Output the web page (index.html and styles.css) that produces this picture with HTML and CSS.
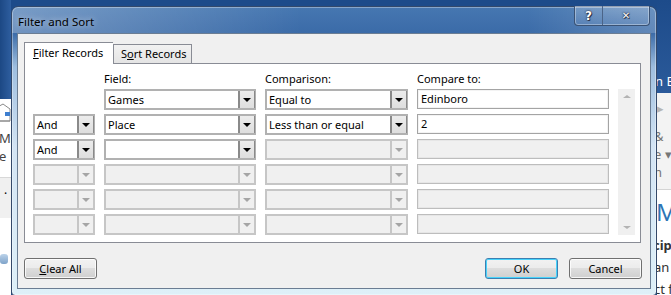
FILE: index.html
```html
<!DOCTYPE html>
<html>
<head>
    <title>Filter and Sort</title>
    <link rel="stylesheet" href="styles.css">
</head>
<body>
    <div class="desktop">
        <div class="app-left">
            <div class="left-blue"></div>
            <div class="left-icon">
                <svg width="11" height="26" viewBox="0 0 11 26">
                    <path d="M-6 6 L3 1 L10 6 L10 18 L-6 18 Z" fill="#fff" stroke="#8a8a8a" stroke-width="1"/>
                    <rect x="5" y="9" width="5" height="4" fill="#3f7fcf"/>
                    <path d="M-6 18 L10 18" stroke="#8a8a8a"/>
                </svg>
            </div>
            <div class="left-text">Ma</div>
            <div class="left-text small">e</div>
            <div class="left-band">.</div>
            <div class="left-fig"></div>
        </div>
        <div class="app-mid"></div>
        <div class="app-right">
            <div class="right-blue"><span>n B</span></div>
            <div class="right-ribbon">
                <div class="rr-arrow">&#9656;</div>
                <div class="rr-text">&amp;</div>
                <div class="rr-text">e &#9662;</div>
                <div class="rr-text">h</div>
            </div>
            <div class="right-doc">
                <div class="rd-head">M</div>
                <div class="rd-bold">cip</div>
                <div class="rd-text">an</div>
                <div class="rd-text">ct f</div>
            </div>
        </div>

        <div class="dialog">
            <div class="titlebar">
                <span class="title">Filter and Sort</span>
                <div class="caption-btns">
                    <span class="cap help">?</span>
                    <span class="cap close">&#x2715;</span>
                </div>
            </div>
            <div class="client">
                <div class="tabs">
                    <div class="tab active"><u>F</u>ilter Records</div>
                    <div class="tab">S<u>o</u>rt Records</div>
                </div>
                <div class="panel">
                    <div class="labels">
                        <span></span>
                        <span>Field:</span>
                        <span>Comparison:</span>
                        <span>Compare to:</span>
                    </div>
                    <div class="grid">
                        <div class="empty"></div>
                        <div class="combo"><span class="val">Games</span><span class="drop"><i></i></span></div>
                        <div class="combo"><span class="val">Equal to</span><span class="drop"><i></i></span></div>
                        <div class="textbox">Edinboro</div>

                        <div class="combo"><span class="val">And</span><span class="drop"><i></i></span></div>
                        <div class="combo"><span class="val">Place</span><span class="drop"><i></i></span></div>
                        <div class="combo"><span class="val">Less than or equal</span><span class="drop"><i></i></span></div>
                        <div class="textbox">2</div>

                        <div class="combo"><span class="val">And</span><span class="drop"><i></i></span></div>
                        <div class="combo"><span class="val"></span><span class="drop"><i></i></span></div>
                        <div class="combo off"><span class="val"></span><span class="drop"><i></i></span></div>
                        <div class="textbox off"></div>

                        <div class="combo off"><span class="val"></span><span class="drop"><i></i></span></div>
                        <div class="combo off"><span class="val"></span><span class="drop"><i></i></span></div>
                        <div class="combo off"><span class="val"></span><span class="drop"><i></i></span></div>
                        <div class="textbox off"></div>

                        <div class="combo off"><span class="val"></span><span class="drop"><i></i></span></div>
                        <div class="combo off"><span class="val"></span><span class="drop"><i></i></span></div>
                        <div class="combo off"><span class="val"></span><span class="drop"><i></i></span></div>
                        <div class="textbox off"></div>

                        <div class="combo off"><span class="val"></span><span class="drop"><i></i></span></div>
                        <div class="combo off"><span class="val"></span><span class="drop"><i></i></span></div>
                        <div class="combo off"><span class="val"></span><span class="drop"><i></i></span></div>
                        <div class="textbox off"></div>

                        <div class="scrollbar">
                            <span class="sb-up"></span>
                            <span class="sb-down"></span>
                        </div>
                    </div>
                </div>
                <div class="footer">
                    <button><u>C</u>lear All</button>
                    <span class="spacer"></span>
                    <button class="default">OK</button>
                    <button>Cancel</button>
                </div>
            </div>
        </div>
    </div>
</body>
</html>
```

FILE: styles.css
```css
body {
    margin: 0;
    width: 671px;
    height: 295px;
    overflow: hidden;
    font-family: "Noto Sans", "Liberation Sans", sans-serif;
    font-size: 11px;
    color: #000;
}

.desktop {
    position: relative;
    display: flex;
    height: 295px;
}

/* --- the Word window behind the dialog --- */

.app-left {
    width: 11px;
    background: #fff;
    overflow: hidden;
}

.left-blue {
    height: 99px;
    background: linear-gradient(to right, #1c4884, #2e5e9f);
}

.left-icon {
    height: 30px;
    padding-top: 4px;
    box-sizing: border-box;
}

.left-text {
    height: 18px;
    line-height: 18px;
    font-size: 13px;
    color: #444;
    text-indent: -1px;
    white-space: nowrap;
}

.left-text.small {
    height: 20px;
}

.left-band {
    margin-top: 10px;
    height: 40px;
    background: #f0f0f0;
    border-top: 1px solid #d8d8d8;
    line-height: 24px;
    font-size: 12px;
    text-indent: 4px;
}

.left-fig {
    margin-top: 36px;
    width: 8px;
    height: 10px;
    background: linear-gradient(#bcd3ea, #7fa3c9);
    border-radius: 3px;
}

.app-mid {
    flex: 1;
    background: #1d4b8a;
}

.app-right {
    width: 14px;
    background: #fff;
    overflow: hidden;
    white-space: nowrap;
}

.right-blue {
    height: 93px;
    background: linear-gradient(#1d4b8a, #2b5a9a);
    box-sizing: border-box;
    padding-top: 73px;
    line-height: 16px;
    font-size: 13px;
    color: #fff;
}

.right-blue span {
    margin-left: -2px;
}

.right-ribbon {
    height: 96px;
    background: #f3f3f3;
    border-bottom: 1px solid #d4d4d4;
    color: #777;
    font-size: 13px;
}

.rr-arrow {
    height: 34px;
    line-height: 30px;
    color: #b5b5b5;
}

.rr-text {
    height: 18px;
    line-height: 18px;
    margin-left: -3px;
}

.right-doc {
    color: #333;
}

.rd-head {
    height: 44px;
    line-height: 44px;
    font-size: 24px;
    color: #2e74b5;
    margin-left: -1px;
}

.rd-bold {
    height: 22px;
    line-height: 22px;
    font-weight: bold;
    font-size: 13px;
    margin-left: -4px;
}

.rd-text {
    height: 22px;
    line-height: 22px;
    font-size: 13px;
    margin-left: -3px;
}

/* --- dialog window --- */

.dialog {
    position: absolute;
    left: 11px;
    top: 6px;
    width: 646px;
    height: 290px;
    box-sizing: border-box;
    border: 1px solid #34496a;
    border-radius: 7px 7px 4px 4px;
    background: linear-gradient(to bottom, #4677b1 0, #3b6ba8 26px, #9ebedf 60px, #d3e4f4 140px, #def0f8 100%);
    padding: 0 5px 5px;
    box-shadow: 0 0 0 1px rgba(255, 255, 255, 0.35) inset;
}

.titlebar {
    height: 26px;
    display: flex;
    align-items: flex-start;
    margin: 0 -5px;
    padding-left: 6px;
    border-radius: 6px 6px 0 0;
    background: linear-gradient(to right, rgba(255, 255, 255, 0.28), rgba(255, 255, 255, 0) 45%, rgba(255, 255, 255, 0) 80%, rgba(255, 255, 255, 0.2));
}

.title {
    flex: 1;
    padding-top: 7px;
    line-height: 16px;
    font-size: 11.5px;
    color: #000;
    text-shadow: 0 0 6px rgba(255, 255, 255, 0.7);
}

.caption-btns {
    display: flex;
    height: 19px;
    margin-top: -1px;
    margin-right: 6px;
    border: 1px solid #3a5274;
    border-top: none;
    border-radius: 0 0 4px 4px;
    box-shadow: inset 0 0 0 1px rgba(255, 255, 255, 0.35);
    background: linear-gradient(rgba(255, 255, 255, 0.2), rgba(255, 255, 255, 0.05));
}

.cap {
    display: flex;
    align-items: center;
    justify-content: center;
    color: #fff;
    font-weight: bold;
    font-family: "DejaVu Sans", sans-serif;
    text-shadow: 0 0 1px #223, 0 0 2px #223, 1px 1px 0 #33415a;
}

.help {
    width: 27px;
    font-size: 12px;
    border-right: 1px solid #4b6488;
}

.close {
    width: 46px;
    font-size: 10px;
}

.client {
    height: 256px;
    box-sizing: border-box;
    border: 1px solid #6b7d93;
    background: #f0f0f0;
    padding: 8px 8px 0 6px;
}

.tabs {
    display: flex;
    align-items: flex-end;
    height: 21px;
    position: relative;
    z-index: 1;
}

.tab {
    box-sizing: border-box;
    height: 19px;
    line-height: 18px;
    border: 1px solid #898c95;
    border-bottom: none;
    background: linear-gradient(#f2f2f2, #e4e4e4);
    padding-left: 7px;
    width: 79px;
    white-space: nowrap;
}

.tab.active {
    width: 89px;
    height: 22px;
    line-height: 19px;
    background: #fff;
    border-right: none;
    padding-left: 8px;
    margin-bottom: -1px;
}

.panel {
    width: 617px;
    height: 180px;
    box-sizing: border-box;
    border: 1px solid #898c95;
    background: #fff;
    padding: 7px 0 0 8px;
}

.labels {
    display: grid;
    grid-template-columns: 62px 152px 143px 192px;
    column-gap: 9px;
    height: 16px;
    line-height: 16px;
    margin-bottom: 2px;
}

.grid {
    display: grid;
    grid-template-columns: 62px 152px 143px 192px 17px;
    grid-template-rows: repeat(6, 21px);
    column-gap: 9px;
    row-gap: 4px;
}

.combo {
    display: flex;
    box-sizing: border-box;
    border: 2px solid #b1b1b1;
    border-right-width: 1px;
    background: #fff;
}

.combo .val {
    flex: 1;
    padding-left: 2px;
    line-height: 17px;
    white-space: nowrap;
    overflow: hidden;
}

.drop {
    width: 17px;
    box-sizing: border-box;
    border: 1px solid #8a8a8a;
    border-left-width: 2px;
    border-top: none;
    border-bottom: none;
    background: linear-gradient(#ececec, #dedede);
    display: flex;
    align-items: center;
    justify-content: center;
}

.drop i {
    width: 0;
    height: 0;
    border-left: 4px solid transparent;
    border-right: 4px solid transparent;
    border-top: 4px solid #000;
}

.combo.off {
    border-color: #c6c6c6;
    background: #f0f0f0;
}

.combo.off .drop {
    border-color: #c6c6c6;
    background: #f0f0f0;
}

.combo.off .drop i {
    border-top-color: #a5a5a5;
}

.textbox {
    box-sizing: border-box;
    height: 20px;
    border: 1px solid #a4a4a4;
    box-shadow: inset 0 0 0 1px #f3f3f3;
    background: #fff;
    padding-left: 3px;
    line-height: 18px;
}

.textbox.off {
    background: #f0f0f0;
    border-color: #bdbdbd;
    box-shadow: inset 0 0 0 1px #e6e6e6;
}

.scrollbar {
    grid-column: 5;
    grid-row: 1 / 7;
    background: #f0f0f0;
    display: flex;
    flex-direction: column;
    justify-content: space-between;
    align-items: center;
    padding: 6px 0;
}

.sb-up {
    width: 0;
    height: 0;
    border-left: 4px solid transparent;
    border-right: 4px solid transparent;
    border-bottom: 3px solid #b3b3b3;
}

.sb-down {
    width: 0;
    height: 0;
    border-left: 4px solid transparent;
    border-right: 4px solid transparent;
    border-top: 3px solid #b3b3b3;
}

.footer {
    display: flex;
    margin-top: 15px;
}

.spacer {
    flex: 1;
}

button {
    width: 73px;
    height: 21px;
    box-sizing: border-box;
    margin: 0 0 0 11px;
    padding: 0;
    border: 1px solid #707070;
    border-radius: 3px;
    background: linear-gradient(#f2f2f2 0, #ebebeb 50%, #dddddd 50%, #cfcfcf 100%);
    box-shadow: inset 0 0 0 1px rgba(255, 255, 255, 0.8);
    font-family: "Noto Sans", "Liberation Sans", sans-serif;
    font-size: 11px;
    color: #000;
    line-height: 17px;
}

button:first-child {
    margin-left: 0;
}

button.default {
    border-color: #3c7fb1;
    box-shadow: inset 0 0 0 1px #48d3fb;
}
```
